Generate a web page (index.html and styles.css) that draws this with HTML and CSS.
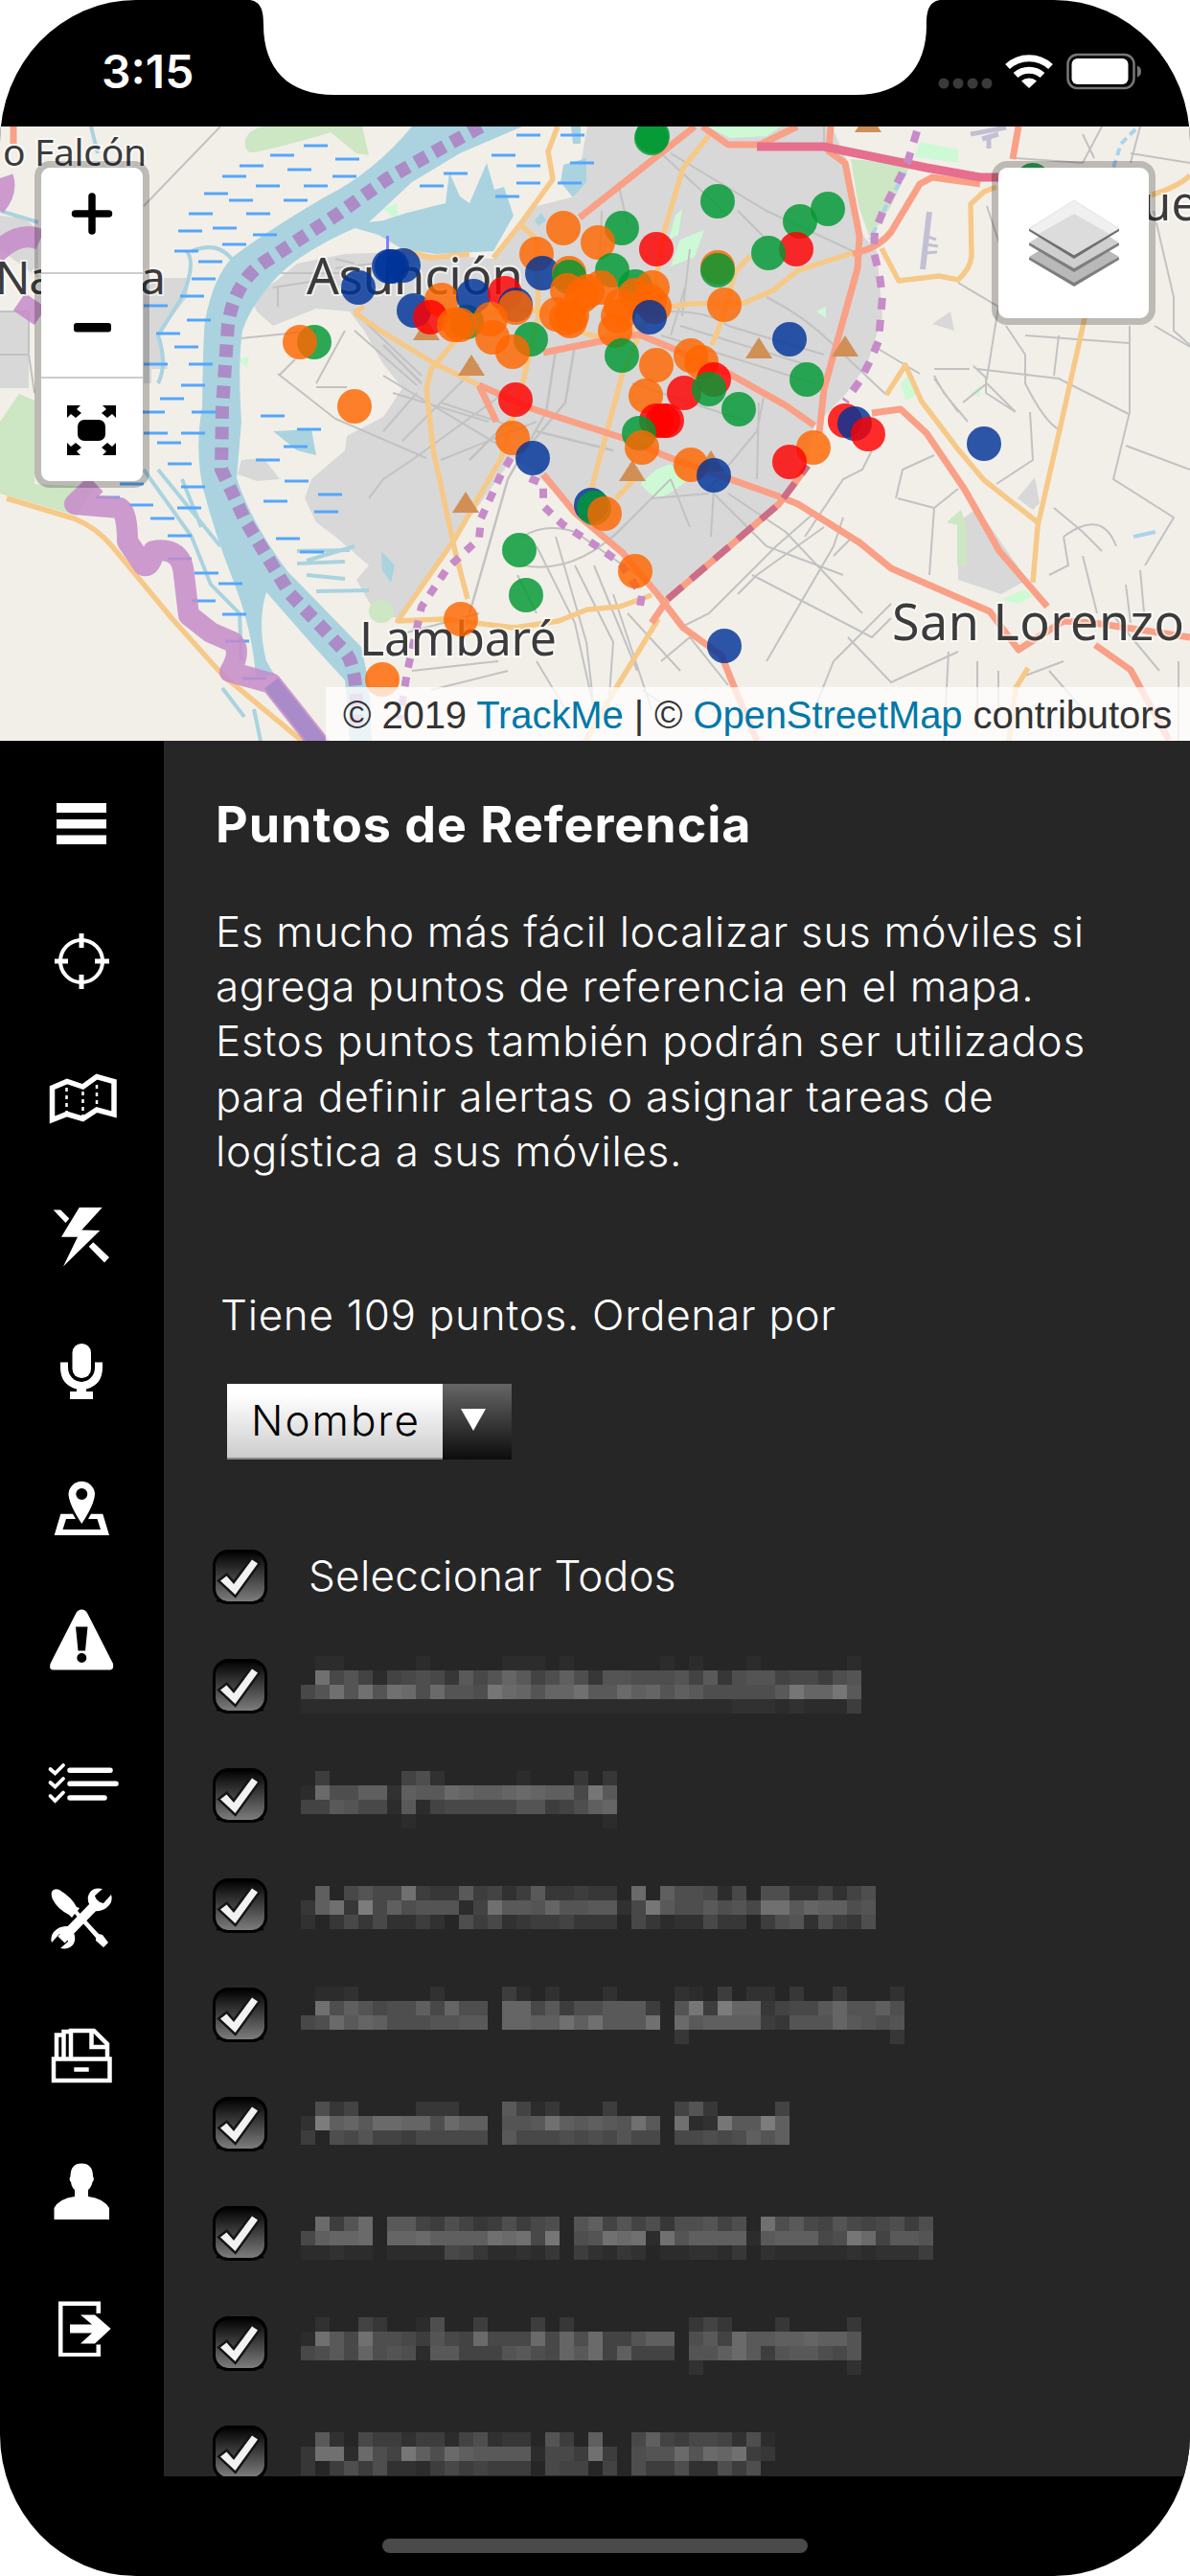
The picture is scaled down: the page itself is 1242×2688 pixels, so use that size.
FILE: index.html
```html
<!DOCTYPE html>
<html lang="es">
<head>
    <meta charset="UTF-8">
    <meta name="viewport" content="width=device-width, initial-scale=1.0">
    <title>TrackMe - Puntos de Referencia</title>
    <link rel="stylesheet" href="styles.css">
</head>
<body>
    <div class="phone">

        <!-- Status bar -->
        <header class="status">
            <span class="time">3:15</span>
            <svg class="notch" width="720" height="100" viewBox="0 0 720 100">
                <path d="M0 0H720C708 2 706 12 706 26C706 72 680 99 632 99H88C40 99 14 72 14 26C14 12 12 2 0 0Z" fill="#fff"/>
            </svg>
            <svg class="signals" width="214" height="40" viewBox="976 54 214 40">
                <g fill="#3a3a3a">
                    <circle cx="984" cy="87" r="5.5"/><circle cx="999" cy="87" r="5.5"/>
                    <circle cx="1014" cy="87" r="5.5"/><circle cx="1029" cy="87" r="5.5"/>
                </g>
                <g fill="none" stroke="#fff" stroke-width="7">
                    <path d="M1050.500 69.500A33 33 0 0 1 1095.500 69.500"/>
                    <path d="M1059 78.500A21 21 0 0 1 1087 78.500"/>
                </g>
                <path d="M1073 92L1065 84.500A12 12 0 0 1 1081 84.500Z" fill="#fff"/>
                <rect x="1113.500" y="57" width="69" height="35" rx="10" fill="none" stroke="#777" stroke-width="2.500"/>
                <rect x="1117.500" y="61" width="59" height="27" rx="6" fill="#fff"/>
                <path d="M1186 68.500Q1190 70 1190 74.500Q1190 79 1186 80.500Z" fill="#777"/>
            </svg>
        </header>

        <!-- Map -->
        <section class="map">
            <svg width="1242" height="641" viewBox="0 132 1242 641">
                <rect y="132" width="1242" height="641" fill="#f2efe9"/>
                <g fill="#d8d8d8">
                    <path d="M613 132H868L885 170L900 245L915 262L921 330L905 380L882 412L850 445L840 490L813 522L692 624L650 578L600 535L560 495L535 478L475 562L415 645L392 640L372 605L385 590L350 560L330 545L318 520L325 500L360 470L362 455L400 435L420 405L400 380L380 345L365 325L330 322L285 340L268 325L262 310L290 292L310 275L360 265L420 263L515 270L560 215L600 205Z"/>
                    <path d="M160 290H198L195 310L165 350L175 385H158V400H150V300ZM252 480L275 478L292 500L268 502L248 495Z"/>
                    <path d="M0 325H30V405H0ZM0 225L25 228L40 240V290L0 260Z"/>
                    <path d="M1000 545L1000 605L1045 620L1072 605L1020 530ZM1062 520L1080 498L1085 525L1078 532ZM973 338L992 325L996 345Z"/>
                </g>
                <g fill="#f2efe9">
                    <path d="M322 370L345 345L372 335L376 345L358 382L335 392Z"/>
                </g>
                <g fill="#cde6c3">
                    <path d="M0 440L20 411L36 418V505L100 508L80 538L0 515Z"/>
                    <path d="M256 145Q254 160 265 159Q300 152 345 138L372 160L385 162L378 132H275Q260 135 256 145Z"/>
                    <path d="M888 166L950 172L930 215L908 248L896 215Z"/>
                    <ellipse cx="398" cy="638" rx="13" ry="12"/>
                    <path d="M988 545L1003 532L1009 550V590H999V548Z"/>
                </g>
                <g fill="#cdfad5">
                    <path d="M668 505L685 490L700 484L712 500L720 500L700 514L685 521Z"/>
                    <path d="M710 250L735 240L725 268L700 278ZM705 225L712 218L708 245L698 250ZM738 132H815L800 142L762 144Z"/>
                    <path d="M940 400L948 392L957 412L945 418ZM852 325L862 320L862 332ZM1012 410L1024 402L1022 414ZM400 218L415 212L415 230ZM960 148L1000 156L1000 170L955 164ZM248 375L260 372L258 384ZM1045 625L1070 615L1078 622L1062 630Z"/>
                </g>

                <!-- minor streets -->
                <g fill="none" stroke="#c2c2c2" stroke-width="2">
                    <path d="M150 215L230 132M252 353L330 345M292 391L308 375M290 390L350 437L445 478M330 400L360 345M330 404H362"/>
                    <path d="M370 345L435 402M380 335L440 392M400 392L530 470M410 410L510 440M420 460L500 380M400 450L435 410M430 480L540 400M460 480L560 440M460 420L550 450M385 520L400 500L430 480"/>
                    <path d="M400 360L440 400M550 420L490 480M580 365L570 430L530 500L490 640M600 360L590 420L540 480M560 450L640 470" stroke-width="2.500"/>
                    <path d="M700 160L800 220L890 262M690 160L760 225M645 190L655 235M628 220L626 270M860 132V155M770 220L800 250M715 300L700 350M720 260L712 330"/>
                    <path d="M700 325Q740 325 760 340L860 370M710 340L840 380M800 310Q840 330 870 360L925 412M690 350L850 400M660 400L780 440M740 510L790 450L797 415M792 420L790 500M640 560L700 500M700 500L720 550M745 510L742 560M680 520L740 515"/>
                    <path d="M545 560Q570 545 600 555L665 600M545 590Q600 600 650 550M540 600L560 640M560 570L600 650L620 740M580 560L612 670L620 740M600 590L640 670L635 740M620 590L665 700M640 620L680 740M655 640L710 700"/>
                    <path d="M760 515L820 555L900 640M740 510L800 570L880 600M820 520L930 590M710 655L740 640L810 570L850 535M785 600L910 665L930 645M770 620L790 600L860 550M800 690L870 570L880 540M850 740L870 690L930 630M840 560L880 500L900 490L910 470M870 580L890 560M690 690L720 665L760 715M885 665L930 712L1000 680M670 720L700 740"/>
                    <path d="M1000 295L1042 320L1030 395L1016 382M975 385H1012M975 392L985 410L1010 440M1005 420L1030 400L1060 430M975 395L1000 430M1030 215L1045 260M1050 340L1070 370V400Q1090 440 1105 448M1070 350L1178 358M1020 385L1105 395L1178 432M1029 395V410L1060 430M1105 350L1100 392"/>
                    <path d="M1179 340V430L1162 500L1225 540L1195 590M1175 465L1242 490M1205 340L1242 362M1204 220L1225 310L1225 345L1242 360M1100 530L1130 555L1150 575M1110 560L1115 590L1095 600M1110 560Q1150 530 1165 570M1130 580L1145 640M1190 595L1195 650M1175 610L1180 650M1075 430L1078 480L1040 505M935 520L942 490L975 475M937 520L975 530L970 600M975 530L1000 510"/>
                    <path d="M990 680L985 773M1020 690V740M1042 700V740M1070 705L1110 690M1095 700L1130 740M1060 165L1130 170L1150 132M1130 140L1142 165M1180 160L1242 170M1190 132L1180 170M1160 640L1210 700M1230 690V773M910 360L960 390"/>
                    <path d="M0 325H30V370H0M30 370L36 410M350 270L370 275M350 280L390 275M285 300L350 290M290 300V320M285 285L360 285M425 660L500 640M430 700L520 690M450 720L530 700M560 690L590 740"/>
                </g>

                <!-- water -->
                <g fill="#aad3df">
                    <path d="M430 132H545L480 160L430 190L385 232Q320 258 290 288Q262 318 253 345Q248 380 252 440L247 499Q262 545 300 596L377 675L385 712L388 773H365L360 710L328 675L278 618Q268 650 278 690L287 705L267 707Q264 660 245 610Q225 560 212 510Q203 470 211 425Q212 350 214 335Q222 290 243 268Q280 240 340 205Q390 180 430 132Z"/>
                    <path d="M360 235L400 230L425 222L465 212L469 180L480 205L490 212L508 170L516 198L526 195L536 225L515 262L455 265L420 260L395 245Z"/>
                    <path d="M588 172L612 165V190L598 206L585 190ZM596 132H606V150H598ZM558 230L565 222L570 230L562 236Z"/>
                    <path d="M285 450L325 448L330 475L310 470ZM398 575L412 590L408 608L399 595Z"/>
                </g>
                <g fill="none" stroke="#aad3df" stroke-width="4">
                    <path d="M0 220L40 232M95 132L102 160M200 262Q230 250 245 275M195 262Q205 275 190 310L165 350Q175 380 165 400M150 490L200 560L220 610L250 640L252 690M165 490L230 570M190 500L210 550M232 718L255 748M265 740L272 773M310 575L365 574M310 588L360 586M320 600L360 604M330 617L385 616M320 585L370 570"/>
                </g>
                <g fill="none" stroke="#aad3ee" stroke-width="4">
                    <path d="M1185 135L1170 150L1162 175M945 180L925 215L908 250" stroke-dasharray="8 5"/><path d="M1183 560L1206 555"/>
                </g>
                <g id="marsh" stroke="#54a6fb" stroke-width="3"></g>

                <!-- airport -->
                <g fill="none" stroke="#c3c0d4">
                    <path d="M970 221L963 281" stroke-width="6"/>
                    <path d="M968 247L977 250M966 255L979 257M966 264L978 263" stroke-width="3"/>
                    <path d="M1013 140L1050 133M1025 145L1042 140M1032 145V155" stroke-width="5"/>
                </g>

                <!-- secondary roads -->
                <g fill="none" stroke="#f6c988" stroke-width="5.500" stroke-linejoin="round">
                    <path d="M7 520L77 541Q100 550 117 570L180 646L233 705L320 777"/>
                    <path d="M582 132L572 158L577 187L543 234L515 269M490 265L450 269L420 261"/>
                    <path d="M543 234L560 250L562 330L547 394L523 478L475 562L415 648L463 646L537 655L583 648L613 636L647 633L680 621"/>
                    <path d="M740 141L713 175L693 242L680 320L650 389L617 511"/>
                    <path d="M370 326L380 320M370 326L400 347L453 379L500 402M480 350L450 385L445 406L452 469L475 575L488 625"/>
                    <path d="M480 335Q570 310 600 340T700 320L720 317L777 316L807 303L833 282L893 263"/>
                    <path d="M743 360L753 335L767 284L783 267M643 520L663 499M687 646L643 718L607 780"/>
                    <path d="M920 259L938 293L980 288L1000 292Q1013 280 1014 267L1013 213L1027 200L1040 195"/>
                    <path d="M925 412L945 381L962 419L1000 469L1027 501L1083 545M1132 332L1107 444L1083 549L1078 608"/>
                    <path d="M1073 697L1060 718L1052 780M1200 204Q1230 195 1242 183"/>
                </g>

                <!-- main roads -->
                <g fill="none" stroke="#f9a086" stroke-width="7" stroke-linejoin="round">
                    <path d="M725 132L605 227M733 132L760 151H793L832 132M14 132V150"/>
                    <path d="M500 402L557 427L650 457L700 478L813 518L833 526L897 566L930 593L1033 638L1063 678L1110 648L1142 650L1242 665"/>
                    <path d="M500 402L518 440M567 368L627 356L667 349L703 364L763 391L820 423L850 444"/>
                    <path d="M567 495L600 535L650 577L687 621L713 655L753 684L770 726L790 773"/>
                    <path d="M680 650L697 625L813 526L843 486"/>
                    <path d="M867 132L865 158L882 170L897 246L895 280L860 406L855 452"/>
                    <path d="M910 431L940 427L967 452L1007 511L1043 575L1093 633"/>
                    <path d="M1063 132L1057 166M1023 192L973 185L960 192L930 242Q920 255 903 261L890 265"/>
                    <path d="M1143 673L1180 699L1220 772"/>
                </g>
                <path d="M790 153H860L967 175L1023 185H1045" fill="none" stroke="#e66f8e" stroke-width="9"/>

                <!-- administrative borders -->
                <g fill="none" stroke="#c78bc9">
                    <path d="M-5 215Q8 200 3 185M-5 265Q20 240 42 250M20 315L42 330M100 505L78 526L125 530Q133 535 133 565L150 590Q158 592 160 575Q190 570 192 600L197 642L220 660L243 670Q252 680 240 701L283 713L340 785" stroke-width="22" stroke-linejoin="round" opacity=".85"/>
                    <path d="M283 713L340 785" stroke="#a98bc9" stroke-width="18"/>
                    <path d="M957 137L947 170L923 217L913 242L912 263L918 288L921 309L917 356L908 377L897 398L882 419" stroke-width="8" stroke-dasharray="12 11"/>
                    <path d="M533 478L523 495L502 541L500 562L467 593L440 633L425 701L417 751M553 499L567 505V528L587 547L623 570L647 587L670 621L667 638" stroke-width="8" stroke-dasharray="10 10"/>
                    <path d="M697 625L813 526L843 486" stroke="#cb6d88" stroke-width="7" stroke-dasharray="20 12"/>
                    <path d="M502 132Q450 160 405 186L353 223L283 269Q245 290 238 339L232 425L231 490L257 545L302 619L360 680Q374 695 372 760" stroke="#ac8cc6" stroke-width="14" stroke-dasharray="13 8.500"/>
                </g>
                <g id="peaks" fill="#d08f55"></g>

                <g class="places">
                    <text x="3" y="173" font-size="39" textLength="150">o Falcón</text>
                    <text x="-5" y="307" font-size="48" textLength="178">Nanawa</text>
                    <text x="320" y="307" font-size="53" textLength="226">Asunción</text>
                    <text x="375" y="684" font-size="50" textLength="206">Lambaré</text>
                    <text x="931" y="668" font-size="52" textLength="305">San Lorenzo</text>
                    <text x="1106" y="230" font-size="49">Luque</text>
                </g>
                <path d="M404.500 246V275" stroke="#8080ff" stroke-width="3"/>
                <g id="markers"></g>
            </svg>

            <div class="control zoom">
                <a><svg width="60" height="60" viewBox="0 0 60 60"><path d="M30 12V48M12.500 30H47.500" stroke="#000" stroke-width="7.500" stroke-linecap="round"/></svg></a>
                <a><svg width="60" height="60" viewBox="0 0 60 60"><rect x="11" y="27" width="39" height="9.500" rx="3"/></svg></a>
                <a>
                    <svg width="60" height="60" viewBox="0 0 60 60">
                        <rect x="15" y="19" width="29" height="22" rx="7"/>
                        <path id="corner" d="M4 4H18L14 8L19 12L13 17L8 13L4 17Z"/>
                        <use href="#corner" transform="matrix(-1 0 0 1 59 0)"/>
                        <use href="#corner" transform="matrix(1 0 0 -1 0 60)"/>
                        <use href="#corner" transform="matrix(-1 0 0 -1 59 60)"/>
                    </svg>
                </a>
            </div>

            <div class="control layers">
                <svg width="94" height="92" viewBox="0 0 94 92">
                    <path d="M0 61L47 33L94 61V63L47 91L0 63Z" fill="#7e7e7e"/>
                    <path d="M0 60L47 32L94 60L47 87Z" fill="#b9b9b9"/>
                    <path d="M0 46L47 18L94 46V48L47 76L0 48Z" fill="#7e7e7e"/>
                    <path d="M0 45L47 17L94 45L47 72Z" fill="#cfcfcf"/>
                    <path d="M0 31L47 3L94 31V33L47 62L0 33Z" fill="#6e6e6e"/>
                    <path d="M0 30.500L47 1L94 30.500L47 58Z" fill="#f0f0f0" stroke="#ccc" stroke-width=".5"/>
                    <path d="M10 36L47 15L84 36L47 58Z" fill="#dcdcdc"/>
                </svg>
            </div>

            <div class="attribution">© 2019 <a>TrackMe</a> | © <a>OpenStreetMap</a> contributors</div>
        </section>

        <main class="content">
            <!-- Sidebar -->
            <nav class="sidebar">
                <a><svg viewBox="0 0 80 80"><path d="M14 18H66V28H14ZM14 35H66V44.500H14ZM14 51.500H66V61H14Z"/></svg></a>
                <a><svg viewBox="0 0 80 80" class="line"><circle cx="40" cy="40" r="22" stroke-width="4"/><path d="M40 11V26M40 54V69M12 40H26M54 40H69" stroke-width="5"/></svg></a>
                <a><svg viewBox="0 0 80 80" class="line"><path d="M9.500 29L25 22.500L41.500 28L56 17.500L74 22.500V57L56 52L41.500 61.500L25 56.500L9.500 62.500Z" stroke-width="5.500"/><path d="M24.500 29V54M41.500 33V60M56 26V50" stroke-width="2.500" stroke-dasharray="4 4"/></svg></a>
                <a><svg viewBox="0 0 80 80"><path d="M37.700 12H61.700L40.300 35.500L59.300 36L21 73.500L36 42.700H19Z"/><path d="M10.700 14.600H18.300L27.300 23.600L23.500 28ZM52.300 48.300L69 64L64 69.500L47.700 52.800Z"/></svg></a>
                <a><svg viewBox="0 0 80 80"><rect x="30.500" y="11" width="19.500" height="36" rx="9.500"/><path d="M18 30.500H26V36A14 15 0 0 0 54 36V30.500H62V36Q62 54 45 58.500V61H52V69H28V61H35V58.500Q18 54 18 36Z"/></svg></a>
                <a><svg viewBox="0 0 80 80"><path fill-rule="evenodd" d="M40.300 56Q26.500 35 26.500 24.500A13.800 14 0 0 1 54 24.500Q54 35 40.300 56ZM40.300 31A6 6 0 1 0 40.300 19A6 6 0 1 0 40.300 31Z"/><path d="M18.300 45.700H31L34 51H24L20.500 62H60L56.500 51H47L50 45.700H62.300L69 68H11.700Z"/></svg></a>
                <a><svg viewBox="0 0 80 80"><path fill-rule="evenodd" d="M40.300 3.500Q44 3.500 46 7L73 60Q74 66.500 70 66.500H10Q6 66.500 7.500 60L34.500 7Q36.500 3.500 40.300 3.500ZM34 21.500L36.500 46.500H44L46.500 21.500ZM40.300 49A5 5 0 1 0 40.300 59A5 5 0 1 0 40.300 49Z"/></svg></a>
                <a><svg viewBox="0 0 80 80" class="line round"><path d="M28 28.200H70M28 42.300H76M28 57H64" stroke-width="5.500"/><path d="M7.500 27L12.500 31.500L21 23M7.500 41L12.500 45.500L21 37M7.500 55L12.500 60L21 51.500" stroke-width="3.800"/></svg></a>
                <a>
                    <svg viewBox="0 0 80 80">
                        <path d="M9 12Q11 8 17 10Q30 18 35 28L38 29L36 32L58 56L62 57L68 65L63 70L55 63L55 60L33 35L30 39L27 36Q15 30 10 20Q8 15 9 12Z"/>
                        <path d="M19 62L58 22" stroke="#fff" stroke-width="10"/>
                        <path d="M62 9Q52 7 48 14Q45 20 49 27L54 32Q63 33 69 26Q73 21 71 15L63 24L56 22L54 16ZM18 71Q28 73 32 66Q35 60 31 53L26 48Q17 47 11 54Q7 59 9 65L17 56L24 58L26 64Z"/>
                    </svg>
                </a>
                <a><svg viewBox="0 0 80 80" class="line"><path d="M11 43.500H69.500V66H11ZM32.300 54.500H47.700M14 43V18.500H20M21.500 43V15H28M29 43V14H53L67 28V43M50.500 15V31H67" stroke-width="4.500"/></svg></a>
                <a><svg viewBox="0 0 80 80"><path d="M40 10.500Q52 10.500 52 24Q54 27 51.500 30Q50 36 47 38V45Q63 47 69 57V69H11.500V57Q17 47 33 45V38Q30 36 29 30Q26.500 27 28.500 24Q28.500 10.500 40 10.500Z"/></svg></a>
                <a><svg viewBox="0 0 80 80"><path d="M16 11.500H60V24H55.500V16H20.500V65H55.500V56.500H60V69H16Z"/><path d="M28 35.500H51L39 25.500H54L70.700 40L54 55.500H39L51 44.500H28Z"/></svg></a>
            </nav>

            <section class="panel">
                <h1>Puntos de Referencia</h1>
                <p class="intro">
                    Es mucho más fácil localizar sus móviles si<br>
                    agrega puntos de referencia en el mapa.<br>
                    Estos puntos también podrán ser utilizados<br>
                    para definir alertas o asignar tareas de<br>
                    logística a sus móviles.
                </p>
                <p class="count">Tiene 109 puntos. Ordenar por</p>
                <div class="select">
                    <span class="value">Nombre</span>
                    <span class="arrow"><svg width="26" height="23" viewBox="0 0 26 23"><path d="M0 0H26L13 23Z" fill="#fff"/></svg></span>
                </div>
                <ul class="points" id="points">
                    <li>
                        <svg class="check" viewBox="0 0 57 57">
                            <defs>
                                <linearGradient id="shine" x2="0" y2="1">
                                    <stop offset="0" stop-color="#000"/>
                                    <stop offset="1" stop-color="#808080"/>
                                </linearGradient>
                            </defs>
                            <g id="tick">
                                <rect x="1.500" y="1.500" width="54" height="54" rx="15" fill="url(#shine)" stroke="#000" stroke-width="3"/>
                                <path d="M4 53Q28 59 53 53" fill="none" stroke="#000" stroke-width="2"/>
                                <path d="M8 32.500L14.500 27.500L22 36L41 10.500L47 14.500L23.500 47Z" fill="#f2f2f2" stroke="#151515" stroke-width="5" paint-order="stroke"/>
                            </g>
                        </svg>
                        <span class="all">Seleccionar Todos</span>
                    </li>
                </ul>
            </section>
        </main>

        <footer class="home"><i></i></footer>
    </div>

    <script src="script.js"></script>
</body>
</html>
```

FILE: styles.css
```css
*{
    margin: 0;
    padding: 0;
    box-sizing: border-box;
    list-style-type: none;
}

body{
    width: 1242px;
    background: #fff;
    font-family: Inter, "Liberation Sans", sans-serif;
}

.phone{
    width: 1242px;
    height: 2688px;
    overflow: hidden;
    background: #000;
    border-radius: 142px / 148px;
}

/* status bar */
.status{
    height: 132px;
    display: flex;
    align-items: flex-start;
    color: #fff;
}

.time{
    width: 261px;
    padding: 46px 0 0 106px;
    font-size: 48px;
    font-weight: 600;
    line-height: 58px;
}

.notch{
    display: block;
}

.signals{
    margin: 54px 0 0 -4px;
}

/* map */
.map{
    height: 641px;
    position: relative;
    overflow: hidden;
}

.map > svg{
    display: block;
}

.places text{
    font-family: "Noto Sans", sans-serif;
    fill: #3b3b3b;
    stroke: rgba(255,255,255,.6);
    stroke-width: 4px;
    paint-order: stroke;
}

.control{
    position: absolute;
    top: 36px;
    background: #fff;
    background-clip: padding-box;
    border: 7px solid rgba(0,0,0,.22);
    border-radius: 16px;
}

.zoom{
    left: 36px;
    width: 120px;
    height: 341px;
}

.zoom a{
    height: 109px;
    display: flex;
    align-items: center;
    justify-content: center;
    padding-bottom: 14px;
}

.zoom a + a{
    border-top: 2px solid #ccc;
    padding-bottom: 0;
}

.layers{
    left: 1035px;
    width: 171px;
    height: 171px;
    display: flex;
    align-items: center;
    justify-content: center;
}

.attribution{
    position: absolute;
    right: 0;
    bottom: 0;
    width: 902px;
    height: 56px;
    padding-left: 18px;
    background: rgba(255,255,255,.75);
    color: #333;
    font: 40px/59px "Liberation Sans", sans-serif;
    letter-spacing: -.1px;
    white-space: nowrap;
}

.attribution a{
    color: #0078a8;
}

/* content */
.content{
    height: 1811px;
    display: flex;
}

.sidebar{
    width: 171px;
    padding-top: 16px;
}

.sidebar a{
    height: 142.7px;
    display: flex;
    align-items: center;
    justify-content: center;
}

.sidebar svg{
    width: 80px;
    height: 80px;
    margin-right: 1px;
    fill: #fff;
}

.sidebar .line{
    fill: none;
    stroke: #fff;
}

.sidebar .round{
    stroke-linecap: round;
}

.panel{
    flex: 1;
    overflow: hidden;
    padding: 58px 0 0 54px;
    background: #262626;
    color: #fff;
    font-size: 44px;
    font-weight: 300;
    letter-spacing: .7px;
    white-space: nowrap;
}

h1{
    font-size: 52px;
    font-weight: 700;
    line-height: 60px;
    letter-spacing: 1px;
}

.intro{
    margin-top: 53px;
    line-height: 57.2px;
}

.count{
    margin: 114px 0 0 5px;
    line-height: 57px;
}

.select{
    width: 297px;
    height: 79px;
    margin: 43px 0 0 12px;
    display: flex;
    color: #000;
}

.value{
    width: 225px;
    padding-left: 25px;
    line-height: 77px;
    letter-spacing: 2px;
    background: linear-gradient(#fff 15%, #ccc);
    border-bottom: 2px solid #888;
}

.arrow{
    flex: 1;
    padding: 26px 0 0 19px;
    background: linear-gradient(#666, #0c0c0c);
    line-height: 0;
}

.points{
    margin-top: 65px;
}

.points li{
    height: 114.3px;
    display: flex;
    align-items: center;
}

.check{
    width: 57px;
    height: 57px;
    margin: 0 43px 0 -3px;
}

.all{
    padding-bottom: 2px;
    letter-spacing: .3px;
}

.points .name{
    align-self: flex-start;
    margin-left: -8px;
}

/* home indicator */
.home{
    height: 104px;
    display: flex;
    justify-content: center;
    padding-top: 65px;
}

.home i{
    width: 444px;
    height: 15px;
    border-radius: 8px;
    background: #4a4a4a;
}
```

FILE: script.js
```js
var NS = 'http://www.w3.org/2000/svg';

function add(parent, tag, attrs){
    var el = document.createElementNS(NS, tag);
    for(var key in attrs){
        el.setAttribute(key, attrs[key]);
    }
    parent.appendChild(el);
    return el;
}

// marsh strokes: left end of each
var marshes = [
    [317,152],[282,162],[250,173],[350,166],[300,177],[347,184],[232,184],[267,194],[317,194],[213,202],[239,209],[296,209],
    [197,223],[257,223],[222,238],[186,241],[264,245],[232,255],[182,262],[207,273],[200,291],[188,309],[150,319],[195,334],
    [163,348],[182,362],[197,380],[150,380],[189,402],[167,416],[147,430],[200,430],[150,452],[189,452],[164,462],[175,484],
    [189,508],[125,505],[100,519],[135,527],[185,530],[157,541],[175,559],[175,583],[203,598],[228,609],[200,627],[232,641],
    [235,669],[253,708],[272,434],[296,466],[267,480],[310,448],[297,502],[275,523],[332,516],[328,534],[288,562],[313,576],
    [539,141],[585,141],[595,170],[539,173],[463,181],[539,191],[582,191],[438,194],[517,205],[513,162]
];
marshes.forEach(function(m){
    add(document.getElementById('marsh'), 'path', {d: 'M' + m[0] + ' ' + m[1] + 'h25'});
});

var peaks = [[445,345],[492,382],[486,525],[660,492],[742,482],[792,364],[882,362],[906,128]];
peaks.forEach(function(p){
    add(document.getElementById('peaks'), 'path', {d: 'M' + p[0] + ' ' + (p[1] - 12) + 'l14 22h-28z'});
});

var colors = {o: '#ff6600', g: '#009933', b: '#003399', r: '#ff0000'};
var markers = [
    ['g',681,142],['g',680,144],['g',649,238],['o',588,238],['o',624,253],['r',685,260],['g',749,210],['g',864,218],
    ['g',835,231],['r',831,260],['g',802,264],['o',749,279],['g',749,282],['o',756,318],['o',560,265],['b',566,285],
    ['o',594,285],['g',594,289],['g',639,282],['g',663,299],
    ['b',406,278],['b',409,278],['b',421,277],['b',374,300],['b',432,324],['o',461,313],['r',449,331],['g',487,336],
    ['b',494,309],['o',474,339],['o',480,339],['r',527,306],['b',538,318],['o',538,321],['o',512,333],['o',514,352],
    ['g',554,354],['o',535,367],['o',592,303],['o',627,300],['o',607,309],['o',613,304],['o',581,328],['o',595,335],
    ['o',597,329],['o',591,332],['o',681,300],['o',663,308],['o',648,319],['o',645,330],['o',642,345],['o',683,320],
    ['o',678,314],['b',678,331],['g',649,371],['o',685,381],['o',721,371],['o',732,378],['o',674,413],['r',745,396],
    ['r',714,410],['g',740,406],['g',771,427],['r',685,439],['r',692,439],['r',696,439],['g',667,452],['o',670,467],
    ['o',721,485],['b',745,496],['r',538,417],['o',535,457],['b',556,478],['b',617,527],['g',620,530],['o',631,536],
    ['g',542,574],['g',549,621],['o',663,596],['o',481,646],['b',756,674],['o',399,709],['g',328,357],['o',313,357],
    ['o',370,424],['b',824,354],['g',842,396],['r',882,439],['b',892,442],['r',906,453],['o',849,467],['r',824,482],
    ['b',1027,463],['g',1078,188]
];
markers.forEach(function(m){
    add(document.getElementById('markers'), 'circle', {cx: m[1], cy: m[2], r: 18, fill: colors[m[0]], 'fill-opacity': .82});
});

// obscured names: one hex digit for each cell brightness
var names = [
    {top: 26, rows: [
        '011000001000001110100000010100010000001',
        '0d685156763968b957a73887778593788566478',
        '68d8d8dc7c887ecb8bbd99cab8a9777779ebbe9',
        '111111111111111111111111111111222121114']},
    {top: 31.5, rows: [
        '0400000572000001000303',
        '1c77aa2a99cbaabcbaa6e9',
        '55986619156666688457ab',
        '0000000100000000000001']},
    {top: 37.2, rows: [
        '0a06866d433945249334330c0a77616077225257',
        '3ad3f6a788815d998b889926e9779786dd9baa78',
        '2036362242074623445333063122633047827437']},
    {top: 28, rows: [
        '011200000200004102000200002104022030030002',
        '0d7a8677a6b770bb69477999408e4fbb35669b88a7',
        '67c9ba77788990bbaadad999d0c9aaaa43888b9878',
        '000000000000000000000000003000000000000003']},
    {top: 33.7, rows: [
        '0735000033300095130004000058300005',
        '2fab9ccbb7caa0889da9a98d90d12e99fa',
        '4076855466666096667676866066767a8a']},
    {top: 39.3, rows: [
        '0c48c099547534746708a58573778570d79658656747',
        '6abbc0bbcaaaadcd6e078dcd1d8aaaa19aaa67ec5998',
        '11211011116531121304213201122130211111212224']},
    {top: 30, rows: [
        '020053001700400040300000000353000300003',
        '1d96d7764865c666c6b7c558aa0795c99aabaa8',
        '6796b7871995558976b9c5a555088ac94899768',
        '000000000000000000000000000200000000002']},
    {top: 35.8, rows: [
        '09206442441572330840a006a54665271',
        '3dd1c75ea7ca99991664d40788c8cbd43',
        '304747221464544406550507447227470']}
];

names.forEach(function(n){
    var li = document.createElement('li');
    var check = add(li, 'svg', {'class': 'check', viewBox: '0 0 57 57'});
    add(check, 'use', {href: '#tick'});

    var svg = add(li, 'svg', {'class': 'name', width: 675, height: 60, 'shape-rendering': 'crispEdges'});
    svg.style.marginTop = n.top + 'px';
    n.rows.forEach(function(row, y){
        for(var x = 0; x < row.length; x++){
            var level = parseInt(row[x], 16);
            if(level){
                var c = 38 + level * 5.7;
                add(svg, 'rect', {x: x * 15, y: y * 15, width: 15, height: 15, fill: 'rgb(' + c + ',' + c + ',' + c + ')'});
            }
        }
    });
    document.getElementById('points').appendChild(li);
});
```
